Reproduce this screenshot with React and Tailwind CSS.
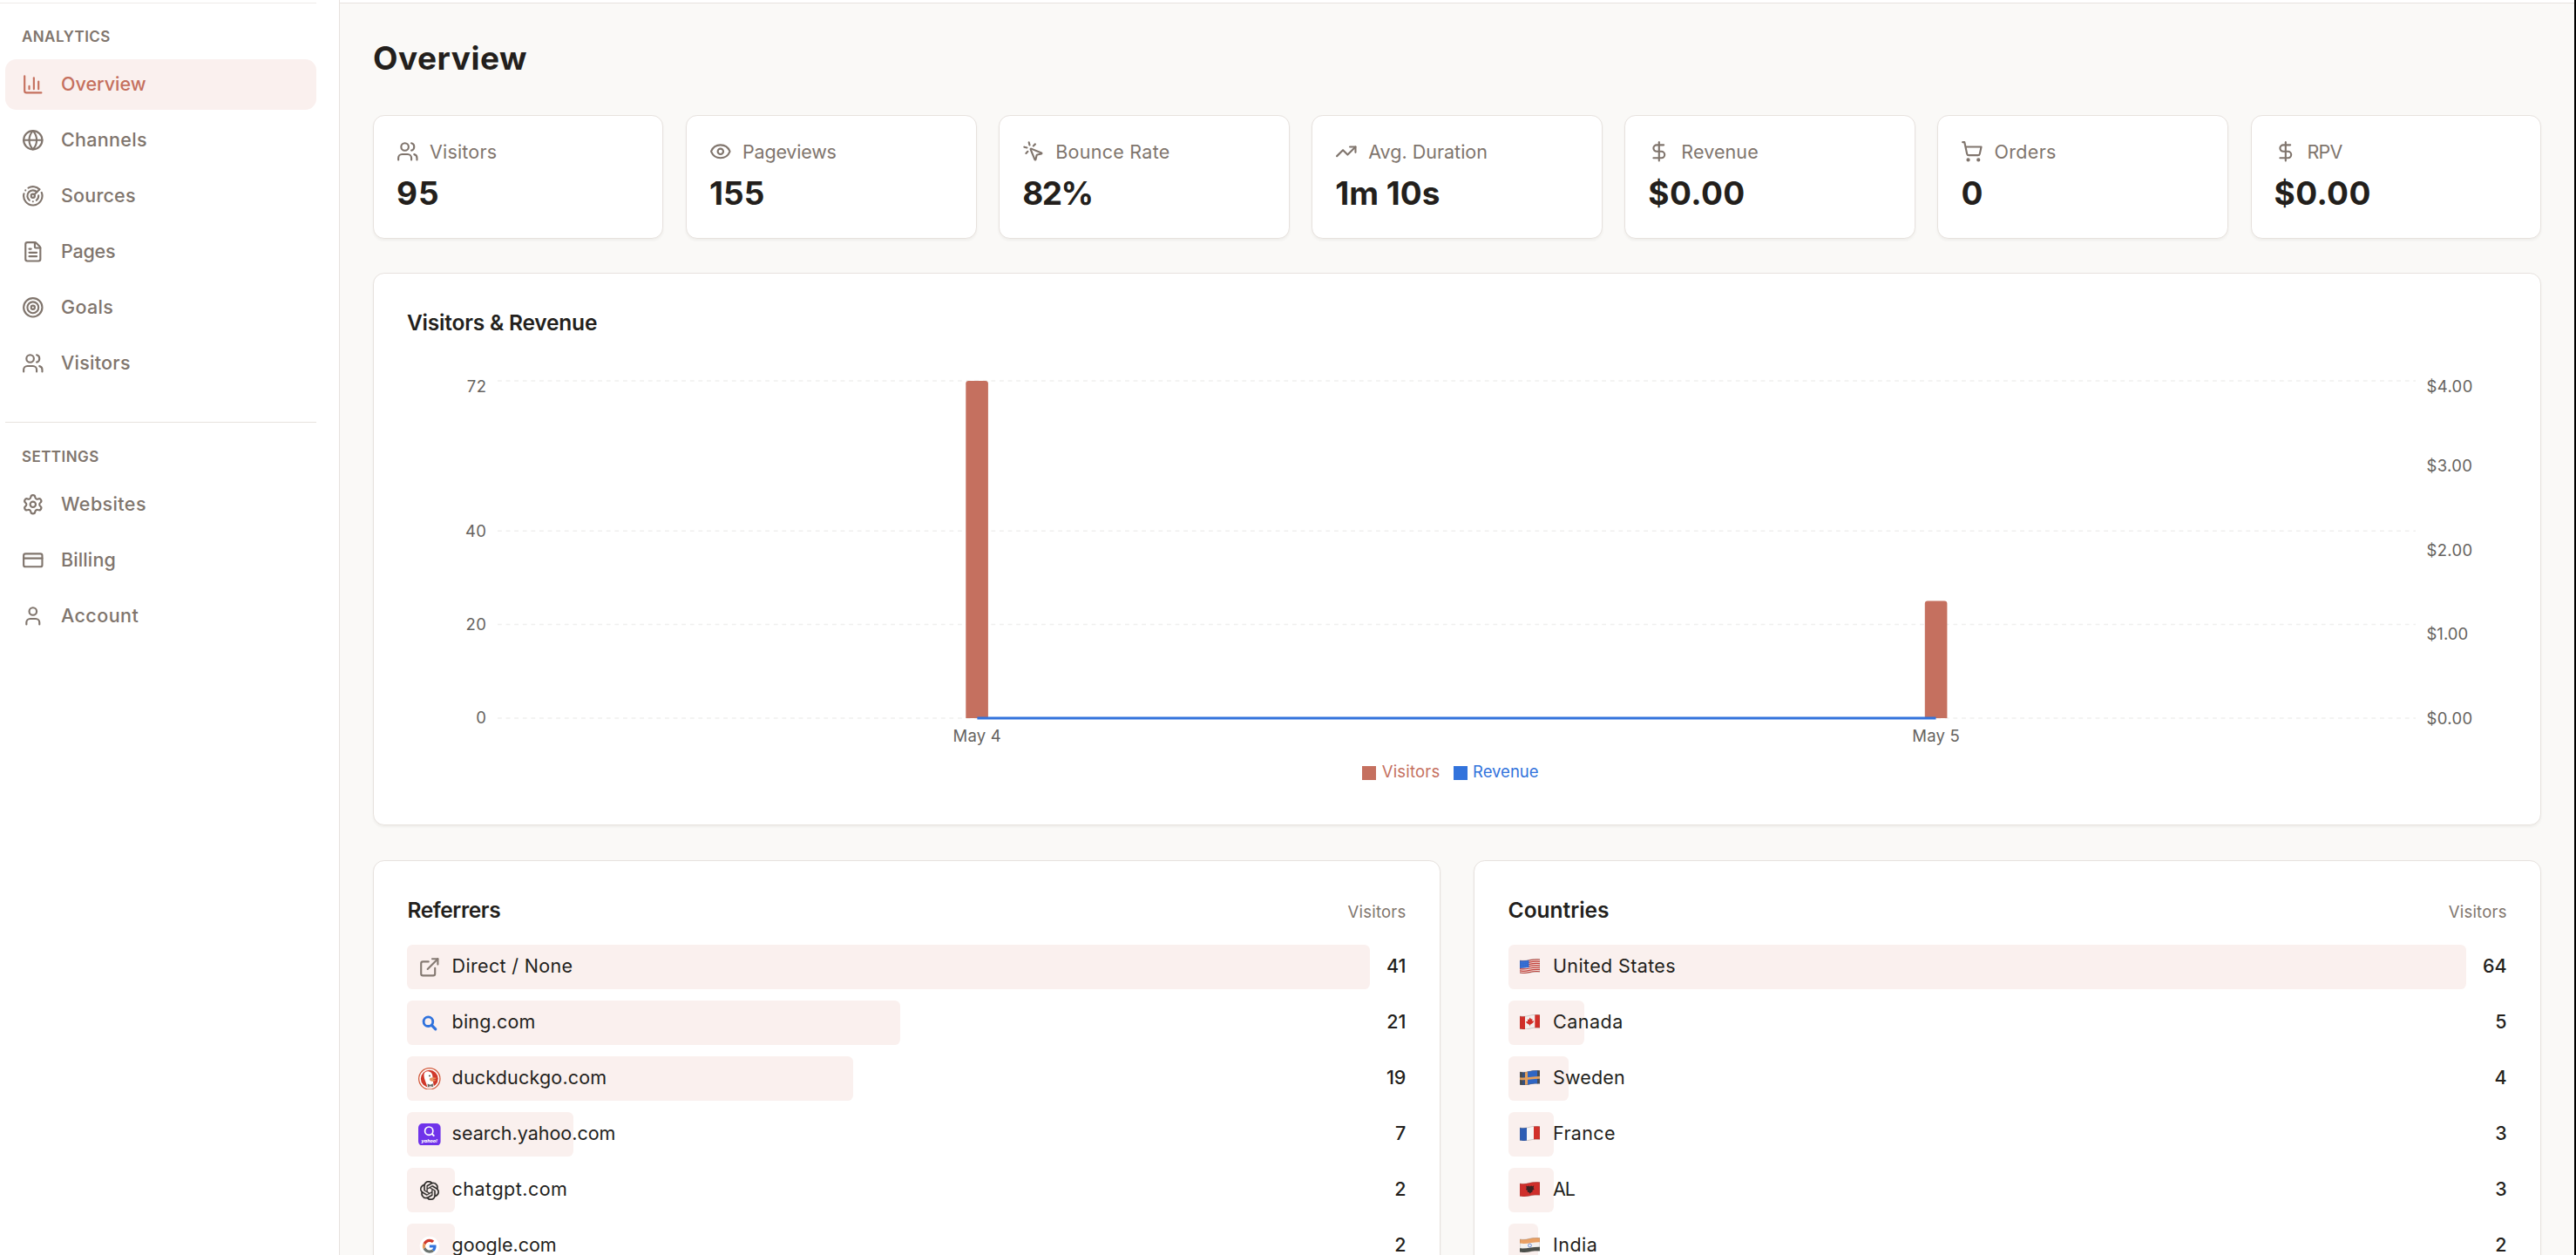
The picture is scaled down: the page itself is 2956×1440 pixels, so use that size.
import {
  ChartColumn, Globe, Radar, FileText, Target, Users, Settings, CreditCard, User,
  Eye, MousePointerClick, TrendingUp, DollarSign, ShoppingCart, ExternalLink,
} from "lucide-react";
import { SiOpenai } from "react-icons/si";

const analytics = [
  { label: "Overview", Icon: ChartColumn, active: true, track: "tracking-[0px]" },
  { label: "Channels", Icon: Globe, track: "tracking-[0.31px]" },
  { label: "Sources", Icon: Radar, track: "tracking-[0.2px]" },
  { label: "Pages", Icon: FileText, track: "tracking-[-0.2px]" },
  { label: "Goals", Icon: Target, track: "tracking-[0.35px]" },
  { label: "Visitors", Icon: Users, track: "tracking-[0.27px]" },
];

const settings = [
  { label: "Websites", Icon: Settings, track: "tracking-[0.4px]" },
  { label: "Billing", Icon: CreditCard, track: "tracking-[0.13px]" },
  { label: "Account", Icon: User, track: "tracking-[0.45px]" },
];

const stats = [
  { label: "Visitors", value: "95", Icon: Users, lt: "tracking-[0.18px]", vt: "tracking-[1px]" },
  { label: "Pageviews", value: "155", Icon: Eye, lt: "tracking-[-0.2px]", vt: "tracking-[0px]" },
  { label: "Bounce Rate", value: "82%", Icon: MousePointerClick, lt: "tracking-[0.28px]", vt: "tracking-[-1.5px]" },
  { label: "Avg. Duration", value: "1m 10s", Icon: TrendingUp, lt: "tracking-[0px]", vt: "tracking-[0px]" },
  { label: "Revenue", value: "$0.00", Icon: DollarSign, lt: "tracking-[0.1px]", vt: "tracking-[0.4px]" },
  { label: "Orders", value: "0", Icon: ShoppingCart, lt: "tracking-[0.34px]", vt: "tracking-[0px]" },
  { label: "RPV", value: "$0.00", Icon: DollarSign, lt: "tracking-[-0.8px]", vt: "tracking-[0.4px]" },
];

function NavItem({ label, Icon, active, track }) {
  return (
    <a
      className={`flex h-[57.6px] items-center gap-[19.2px] rounded-[12.8px] px-[19.2px] ${
        active ? "bg-[#faf0ee] text-[#c5705e]" : "text-[#80756d]"
      }`}
    >
      <Icon className="size-[25.6px]" strokeWidth={2} />
      <span className={`-mt-0.5 text-[21.5px] font-medium ${track}`}>{label}</span>
    </a>
  );
}

function Sidebar() {
  return (
    <aside className="h-full w-[390px] shrink-0 border-r border-[#e7e2de] bg-white pr-[26px]">
      <div className="h-1 border-b border-[#eeebe8]" />
      <div className="pl-1.5">
        <div className="mt-[26px] pl-[19px] text-[17px] leading-6 font-semibold tracking-[0.42px] text-[#80756d]">ANALYTICS</div>
        <nav className="mt-3.5 flex flex-col gap-[6.4px]">
          {analytics.map((n) => <NavItem key={n.label} {...n} />)}
        </nav>
        <div className="mt-[38.4px] border-t border-[#e7e2de]" />
        <div className="mt-[27px] pl-[19px] text-[17px] leading-6 font-semibold tracking-[0.43px] text-[#80756d]">SETTINGS</div>
        <nav className="mt-3.5 flex flex-col gap-[6.4px]">
          {settings.map((n) => <NavItem key={n.label} {...n} />)}
        </nav>
      </div>
    </aside>
  );
}

const card = "rounded-[12.8px] border border-[#e7e2de] bg-white shadow-[0_2px_3px_rgba(40,30,20,0.05)]";

function StatCard({ label, value, Icon, lt, vt }) {
  return (
    <div className={`h-[142px] px-[26px] pt-[24.5px] ${card}`}>
      <div className="flex h-8 items-center gap-[12.4px] text-[#80756d]">
        <Icon className="size-[25.6px]" strokeWidth={2} />
        <span className={`text-[21.5px] leading-8 whitespace-nowrap ${lt}`}>{label}</span>
      </div>
      <div className={`mt-[12.5px] text-[37px] leading-10 font-bold text-[#231f1c] ${vt}`}>{value}</div>
    </div>
  );
}

function Chart() {
  return (
    <svg className="mt-3.5 block h-[500px] w-[2410px]" viewBox="467 400 2410 500" fontSize="18.5">
      <g stroke="#f0efee" strokeWidth="1.6" strokeDasharray="4.8 4.8">
        {[437, 609.2, 716.5, 824].map((y) => <line key={y} x1="571" x2="2772" y1={y} y2={y} />)}
      </g>
      <g fill="#c5705f">
        <path d="M1108.3 824V440.2q0-3.2 3.2-3.2h19.2q3.2 0 3.2 3.2V824z" />
        <path d="M2208.8 824V692.8q0-3.2 3.2-3.2h19.2q3.2 0 3.2 3.2V824z" />
      </g>
      <line x1="1121.4" x2="2221.5" y1="824" y2="824" stroke="#3273dc" strokeWidth="3.2" />
      <g fill="#666360">
        <g textAnchor="end" letterSpacing="0.5">
          <text x="558.5" y="450">72</text>
          <text x="558.5" y="615.7">40</text>
          <text x="558.5" y="722.7">20</text>
          <text x="558.5" y="830.4">0</text>
        </g>
        <g letterSpacing="0.35">
          <text x="2784.5" y="450">$4.00</text>
          <text x="2784.5" y="541">$3.00</text>
          <text x="2784.5" y="637.5">$2.00</text>
          <text x="2784.5" y="734" letterSpacing="0">$1.00</text>
          <text x="2784.5" y="831">$0.00</text>
        </g>
        <g textAnchor="middle" letterSpacing="0.2">
          <text x="1121.2" y="851.3">May 4</text>
          <text x="2221.7" y="851.3">May 5</text>
        </g>
      </g>
      <rect x="1563" y="879" width="16" height="16" fill="#c5705f" />
      <text x="1585.7" y="892.3" fill="#c5705f" letterSpacing="0.2">Visitors</text>
      <rect x="1668" y="879" width="16" height="16" fill="#3273dc" />
      <text x="1690" y="892.3" fill="#3273dc">Revenue</text>
    </svg>
  );
}

function BingIcon() {
  return (
    <svg className="size-[25.6px]" viewBox="0 0 26 26" fill="none" stroke="#2f72dd" strokeWidth="2.9">
      <circle cx="11.6" cy="11.4" r="5.4" />
      <path d="M15.4 15.3l4.7 4.9" strokeLinecap="round" strokeWidth="3.2" />
    </svg>
  );
}

function DuckIcon() {
  return (
    <svg className="size-[25.6px]" viewBox="0 0 26 26">
      <circle cx="13" cy="13" r="13" fill="#d2583a" />
      <circle cx="13" cy="13" r="11.7" fill="#fff" />
      <circle cx="13" cy="13" r="10.1" fill="#d0392b" />
      <path d="M6.6 8.2C6.8 5.2 9.6 3.8 12.6 4.6c3.4 1 4.2 3.8 4.2 7.2 0 4 .9 6.700 1.300 10.100-3 1.400-5.500 1.200-7.700.4C9.200 17.500 6.300 12.500 6.600 8.200z" fill="#fff" />
      <path d="M13.500 12.400c2-1.400 5.200-1 7.600-.4-1 1.500-3 1.700-4.500 2 1.600.5 3 .6 4 .5-1.200 1.800-5.400 2.200-6.900.4-.7-.9-.8-1.800-.2-2.500z" fill="#e8935e" />
      <circle cx="13.2" cy="9.6" r="0.9" fill="#3a3a3a" />
      <path d="M10.800 18.700l3.200 1.300 3.200-1.400v4l-3.200-1-3 1.200z" fill="#6a6d66" />
    </svg>
  );
}

function YahooIcon() {
  return (
    <svg className="size-[25.6px]" viewBox="0 0 26 26">
      <rect width="26" height="26" rx="5" fill="#7033ea" />
      <circle cx="12.4" cy="8.8" r="4.7" fill="none" stroke="#fff" strokeWidth="1.7" />
      <path d="M15.8 12l2.8 2.9" stroke="#fff" strokeWidth="1.9" />
      <text x="13" y="22.6" textAnchor="middle" fontSize="5.4" fontWeight="800" fontStyle="italic" fill="#fff">yahoo!</text>
    </svg>
  );
}

function GoogleIcon() {
  return (
    <svg className="size-[25.6px]" viewBox="0 0 26 26">
      <circle cx="13" cy="13" r="11.3" fill="#fff" />
      <g transform="translate(4.9 4.8) scale(0.34)">
        <path fill="#cf3a2c" d="M24 9.5c3.54 0 6.71 1.22 9.21 3.6l6.85-6.85C35.9 2.38 30.47 0 24 0 14.62 0 6.51 5.38 2.56 13.22l7.98 6.19C12.43 13.72 17.74 9.5 24 9.5z" />
        <path fill="#3273dc" d="M46.98 24.55c0-1.57-.15-3.09-.38-4.55H24v9.02h12.94c-.58 2.96-2.26 5.48-4.78 7.18l7.73 6c4.51-4.18 7.09-10.36 7.09-17.65z" />
        <path fill="#e79a5c" d="M10.53 28.59c-.48-1.45-.76-2.99-.76-4.59s.27-3.14.76-4.59l-7.98-6.19C.92 16.46 0 20.12 0 24c0 3.88.92 7.54 2.56 10.78l7.97-6.19z" />
        <path fill="#6c7470" d="M24 48c6.48 0 11.93-2.13 15.89-5.81l-7.73-6c-2.15 1.45-4.92 2.3-8.16 2.3-6.26 0-11.57-4.22-13.47-9.91l-7.98 6.19C6.51 42.62 14.62 48 24 48z" />
      </g>
    </svg>
  );
}

const wave = "M0 1.9C4 2.7 7 2.3 11 1.3S18 .1 23 .5V15.3C18 14.9 15 15.3 11 16.2S4 17.3 0 16.6Z";

function Flag({ id, children }) {
  return (
    <svg className="-mt-[3px] mr-[15px] ml-[0.6px] h-[17px] w-[23px]" viewBox="0 0 23 17">
      <clipPath id={id}><path d={wave} /></clipPath>
      <g clipPath={`url(#${id})`}>{children}</g>
      <path d={wave} fill="none" stroke="#6b5a55" strokeOpacity="0.35" strokeWidth="0.8" />
    </svg>
  );
}

const UsFlag = (
  <Flag id="us">
    <rect width="23" height="17" fill="#f3e2de" />
    {[2.4, 4.7, 7, 9.3, 11.6, 13.9, 16.2].map((y) => (
      <path key={y} d={`M0 ${y}c4 .8 7 .4 11-.6s7-1.200 12-.8`} fill="none" stroke="#c2403a" strokeWidth="1.25" />
    ))}
    <path d="M0 1.500h10.500v8.500L0 11z" fill="#2f68d0" />
    <path d="M1.500 4h8M1.500 6.200h8M1.500 8.400h8" stroke="#86a6e2" strokeWidth="0.5" strokeDasharray="0.8 1.2" />
  </Flag>
);
const CaFlag = (
  <Flag id="ca">
    <rect width="23" height="17" fill="#f3efed" />
    <path d="M0 0h6v17H0zM17.300 0H23v17h-5.700z" fill="#d12e28" />
    <path d="M11.700 3.500l1.300 2 1.500-.5-.4 2.500 2.200-.3-.8 2-3 2.400h-.5v1.700h-.6v-1.500h-.6L7.700 9.700l-.6-1.800 2.100.2-.4-2.500 1.600.4z" fill="#d12e28" />
  </Flag>
);
const SeFlag = (
  <Flag id="se">
    <rect width="23" height="17" fill="#35517f" />
    <path d="M9 0h12v17H9z" fill="#2f66c4" />
    <path d="M0 0h3v17H0zM20 0h3v17h-3z" fill="#474b50" />
    <path d="M6 0h3v17H6z" fill="#e5a05c" />
    <path d="M0 8.200C6 9.500 14 7 23 7v2.800C14 9.800 6 12 0 11z" fill="#e5a05c" />
  </Flag>
);
const FrFlag = (
  <Flag id="fr">
    <rect width="23" height="17" fill="#f7f5f5" />
    <path d="M0 0h8v17H0z" fill="#2d5db4" />
    <path d="M16 0h7v17h-7z" fill="#d1302b" />
  </Flag>
);
const AlFlag = (
  <Flag id="al">
    <rect width="23" height="17" fill="#cf2f2b" />
    <path d="M10.400 4.500l1.300 1 1.300-1.200 1.300.9 1.900-.9-.5 2.800.9 1.900-1.900.5-.4 2.300-1.300.1-1.300 1.900-1.300-1.900-1.500.1-.1-2.200-1.800-.8.700-1.800-.5-2.800 1.900.9z" fill="#3b2424" />
  </Flag>
);
const InFlag = (
  <Flag id="in">
    <rect width="23" height="17" fill="#f3f1ef" />
    <path d="M0 0h23v5.300C16 5 8 8 0 6.600z" fill="#e9a064" />
    <path d="M0 12.300C8 13 15 10.500 23 10.800V17H0z" fill="#4c504b" />
    <circle cx="11.500" cy="9" r="1.900" fill="none" stroke="#6f8fd6" strokeWidth="1" />
  </Flag>
);

const referrers = [
  { label: "Direct / None", count: 41, icon: <ExternalLink className="size-[25.6px] text-[#857a73]" />, track: "tracking-[0.33px]" },
  { label: "bing.com", count: 21, icon: <BingIcon />, track: "tracking-[0.2px]" },
  { label: "duckduckgo.com", count: 19, icon: <DuckIcon />, track: "tracking-[0.18px]" },
  { label: "search.yahoo.com", count: 7, icon: <YahooIcon />, track: "tracking-[0px]" },
  { label: "chatgpt.com", count: 2, icon: <SiOpenai className="mx-[1.8px] size-[22px] stroke-[#2a2725] stroke-[0.3px] text-[#2a2725]" />, track: "tracking-[0.48px]" },
  { label: "google.com", count: 2, icon: <GoogleIcon />, track: "tracking-[0px]" },
];

const countries = [
  { label: "United States", count: 64, icon: UsFlag, track: "tracking-[0.37px]" },
  { label: "Canada", count: 5, icon: CaFlag, track: "tracking-[0.5px]" },
  { label: "Sweden", count: 4, icon: SeFlag, track: "tracking-[0.15px]" },
  { label: "France", count: 3, icon: FrFlag, track: "tracking-[0.35px]" },
  { label: "AL", count: 3, icon: AlFlag, track: "tracking-[-1px]" },
  { label: "India", count: 2, icon: InFlag, track: "tracking-[0.5px]" },
];

function ListCard({ title, rows, max, titleTrack, iconGap }) {
  return (
    <section className={`h-[520px] px-[38.4px] pt-10 ${card}`}>
      <header className="flex h-8 items-baseline justify-between leading-8">
        <h2 className={`text-[24.5px] font-semibold text-[#231f1c] ${titleTrack}`}>{title}</h2>
        <span className="text-[18.5px] tracking-[0.2px] text-[#80756d]">Visitors</span>
      </header>
      <div className="mt-6 flex flex-col gap-[12.8px]">
        {rows.map((r) => (
          <div key={r.label} className="flex h-[51.2px] items-center gap-[19.2px] text-[21.5px] text-[#231f1c]">
            <div className="relative h-full flex-1">
              <div className="absolute inset-y-0 left-0 rounded-[6.4px] bg-[#faf0ee]" style={{ width: `${(r.count / max) * 100}%` }} />
              <div className={`relative flex h-full items-center px-[12.8px] ${iconGap}`}>
                {r.icon}
                <span className={`-mt-[3px] ${r.track}`}>{r.label}</span>
              </div>
            </div>
            <span className="-mt-[3px] font-medium">{r.count}</span>
          </div>
        ))}
      </div>
    </section>
  );
}

export default function App() {
  return (
    <div className="flex h-[1440px] w-[2956px] overflow-hidden border-r-2 border-black bg-[#faf9f7] font-['Inter',sans-serif]">
      <Sidebar />
      <div className="min-w-0 flex-1">
        <div className="h-1 border-b border-[#e7e2de] bg-white" />
        <main className="px-[38px] pt-[38px]">
          <h1 className="text-[37px] leading-[49px] font-bold tracking-[0.5px] text-[#231f1c]">Overview</h1>
          <div className="mt-[41px] grid grid-cols-7 gap-[25.6px]">
            {stats.map((s) => <StatCard key={s.label} {...s} />)}
          </div>
          <section className={`mt-[39px] h-[634px] px-[38px] pt-10 ${card}`}>
            <h2 className="text-[24.5px] leading-8 font-semibold tracking-[-0.2px] text-[#231f1c]">Visitors &amp; Revenue</h2>
            <Chart />
          </section>
          <div className="mt-10 grid grid-cols-2 gap-[38.4px]">
            <ListCard title="Referrers" rows={referrers} max={41} titleTrack="tracking-[-0.4px]" iconGap="gap-[12.8px]" />
            <ListCard title="Countries" rows={countries} max={64} titleTrack="tracking-[0px]" iconGap="gap-0" />
          </div>
        </main>
      </div>
    </div>
  );
}
